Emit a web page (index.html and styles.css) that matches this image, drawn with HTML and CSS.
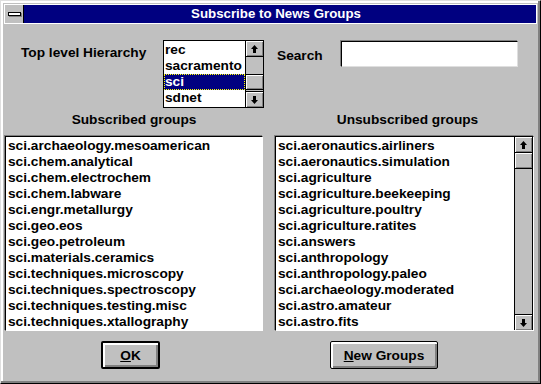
FILE: index.html
```html
<!DOCTYPE html>
<html lang="en">
<head>
    <meta charset="UTF-8">
    <title>Subscribe to News Groups</title>
    <link rel="stylesheet" href="styles.css">
</head>
<body>
    <div class="window">
        <div class="titlebar">
            <div class="sysmenu"><span class="sysbar"></span></div>
            <div class="title">Subscribe to News Groups</div>
        </div>

        <div class="top-row">
            <div class="hier-label">Top level Hierarchy</div>
            <div class="listbox hier">
                <ul class="items">
                    <li>rec</li>
                    <li>sacramento</li>
                    <li class="selected">sci</li>
                    <li>sdnet</li>
                </ul>
                <div class="scrollbar">
                    <div class="arrow"><svg width="9" height="10" viewBox="0 0 9 10"><path d="M4.5 1 L8 5 L6 5 L6 9 L3 9 L3 5 L1 5 Z" fill="#000"/></svg></div>
                    <div class="track"><div class="thumb thumb-mid"></div></div>
                    <div class="arrow"><svg width="9" height="10" viewBox="0 0 9 10"><path d="M4.5 9 L8 5 L6 5 L6 1 L3 1 L3 5 L1 5 Z" fill="#000"/></svg></div>
                </div>
            </div>
            <div class="search-label">Search</div>
            <input class="search" type="text">
        </div>

        <div class="groups">
            <div class="group-col">
                <div class="group-label">Subscribed groups</div>
                <div class="listbox big">
                    <ul class="items">
                        <li>sci.archaeology.mesoamerican</li>
                        <li>sci.chem.analytical</li>
                        <li>sci.chem.electrochem</li>
                        <li>sci.chem.labware</li>
                        <li>sci.engr.metallurgy</li>
                        <li>sci.geo.eos</li>
                        <li>sci.geo.petroleum</li>
                        <li>sci.materials.ceramics</li>
                        <li>sci.techniques.microscopy</li>
                        <li>sci.techniques.spectroscopy</li>
                        <li>sci.techniques.testing.misc</li>
                        <li>sci.techniques.xtallography</li>
                    </ul>
                </div>
            </div>
            <div class="group-col right">
                <div class="group-label">Unsubscribed groups</div>
                <div class="listbox big">
                    <ul class="items">
                        <li>sci.aeronautics.airliners</li>
                        <li>sci.aeronautics.simulation</li>
                        <li>sci.agriculture</li>
                        <li>sci.agriculture.beekeeping</li>
                        <li>sci.agriculture.poultry</li>
                        <li>sci.agriculture.ratites</li>
                        <li>sci.answers</li>
                        <li>sci.anthropology</li>
                        <li>sci.anthropology.paleo</li>
                        <li>sci.archaeology.moderated</li>
                        <li>sci.astro.amateur</li>
                        <li>sci.astro.fits</li>
                    </ul>
                    <div class="scrollbar">
                        <div class="arrow"><svg width="9" height="10" viewBox="0 0 9 10"><path d="M4.5 1 L8 5 L6 5 L6 9 L3 9 L3 5 L1 5 Z" fill="#000"/></svg></div>
                        <div class="track"><div class="thumb"></div></div>
                        <div class="arrow"><svg width="9" height="10" viewBox="0 0 9 10"><path d="M4.5 9 L8 5 L6 5 L6 1 L3 1 L3 5 L1 5 Z" fill="#000"/></svg></div>
                    </div>
                </div>
            </div>
        </div>

        <div class="buttons">
            <button class="btn default ok"><u>O</u>K</button>
            <button class="btn newgroups"><u>N</u>ew Groups</button>
        </div>
    </div>
</body>
</html>
```

FILE: styles.css
```css
body {
    margin: 0;
    background: #c0c0c0;
    font-family: "Liberation Sans", Arial, sans-serif;
    font-weight: bold;
    font-size: 13.7px;
    color: #000;
}

.window {
    box-sizing: border-box;
    width: 541px;
    height: 384px;
    background: #c0c0c0;
    border: 1px solid;
    border-color: #dfdfdf #000 #000 #dfdfdf;
    padding: 3px 3px 0 3px;
    box-shadow: inset -2px -2px 0 #808080, inset 2px 2px 0 #fff;
}

.titlebar {
    display: flex;
    height: 18px;
    border: 1px solid #fff;
    background: #000080;
}

.sysmenu {
    width: 18px;
    background: #c0c0c0;
    border-right: 1px solid #000;
    display: flex;
    align-items: center;
    justify-content: center;
}

.sysbar {
    width: 11px;
    height: 2px;
    background: #fff;
    border: 1px solid #000;
    box-shadow: 1px 1px 0 #808080;
}

.title {
    flex: 1;
    color: #fff;
    text-align: center;
    line-height: 18px;
    padding-right: 8px;
    font-size: 13.3px;
}

.top-row {
    display: flex;
    align-items: flex-start;
    margin-top: 16px;
}

.hier-label {
    margin-left: 17px;
    margin-top: 5px;
    width: 142px;
}

.listbox {
    display: flex;
    background: #fff;
    border: 1px solid #000;
    box-sizing: border-box;
}

.items {
    list-style: none;
    margin: 0;
    padding: 0;
    flex: 1;
    overflow: hidden;
}

.items li {
    height: 16px;
    line-height: 16px;
    padding-left: 2px;
    white-space: nowrap;
}

.items li.selected {
    background: #000080;
    color: #fff;
    outline: 1px dotted #ffff00;
    outline-offset: -1px;
}

.hier {
    width: 101px;
    height: 68px;
}

.hier .items {
    padding-top: 1px;
}

.hier .items li {
    padding-left: 1px;
}

.scrollbar {
    width: 17px;
    border-left: 1px solid #000;
    display: flex;
    flex-direction: column;
    background: #c0c0c0;
}

.arrow {
    height: 16px;
    box-sizing: border-box;
    background: #c0c0c0;
    border-bottom: 1px solid #000;
    box-shadow: inset 1px 1px 0 #fff, inset -1px -1px 0 #808080;
    display: flex;
    align-items: center;
    justify-content: center;
}

.arrow:last-child {
    border-bottom: none;
    border-top: 1px solid #000;
}

.track {
    flex: 1;
    display: flex;
    flex-direction: column;
}

.thumb {
    height: 16px;
    box-sizing: border-box;
    border-bottom: 1px solid #000;
    background: #c0c0c0;
    box-shadow: inset 1px 1px 0 #fff, inset -1px -1px 0 #808080;
}

.thumb-mid {
    margin-top: 17px;
    border-top: 1px solid #000;
}

.search-label {
    margin-left: 13px;
    margin-top: 8px;
    width: 64px;
}

.search {
    box-sizing: border-box;
    width: 177px;
    height: 26px;
    margin-top: 1px;
    background: #fff;
    border: 1px solid;
    border-color: #000 #dfdfdf #dfdfdf #000;
    box-shadow: -1px -1px 0 #808080;
    padding: 0;
}

.groups {
    display: flex;
    gap: 12px;
    margin-top: 3px;
    margin-left: 1px;
}

.group-col {
    width: 258px;
    display: flex;
    flex-direction: column;
}

.group-col.right {
    width: 259px;
}

.group-label {
    text-align: center;
    height: 17px;
    line-height: 17px;
    margin-bottom: 8px;
}

.group-col.right .group-label {
    padding-left: 6px;
}

.big {
    height: 195px;
    border-color: #000 #fff #fff #000;
    box-shadow: -1px -1px 0 #808080;
}

.big .items {
    padding-top: 1px;
}

.big .scrollbar {
    border-right: 1px solid #000;
}

.buttons {
    display: flex;
    margin-top: 10px;
}

.btn {
    box-sizing: border-box;
    height: 28px;
    font: inherit;
    color: #000;
    background: #c0c0c0;
    border: 1px solid #000;
    border-radius: 2px;
    box-shadow: inset 1px 1px 0 #fff, inset 2px 2px 0 #fff, inset -1px -1px 0 #808080, inset -2px -2px 0 #808080;
    padding: 0;
}

.btn.default {
    border-width: 2px;
}

.ok {
    width: 59px;
    margin-left: 97px;
}

.newgroups {
    width: 108px;
    margin-left: 170px;
}
```
